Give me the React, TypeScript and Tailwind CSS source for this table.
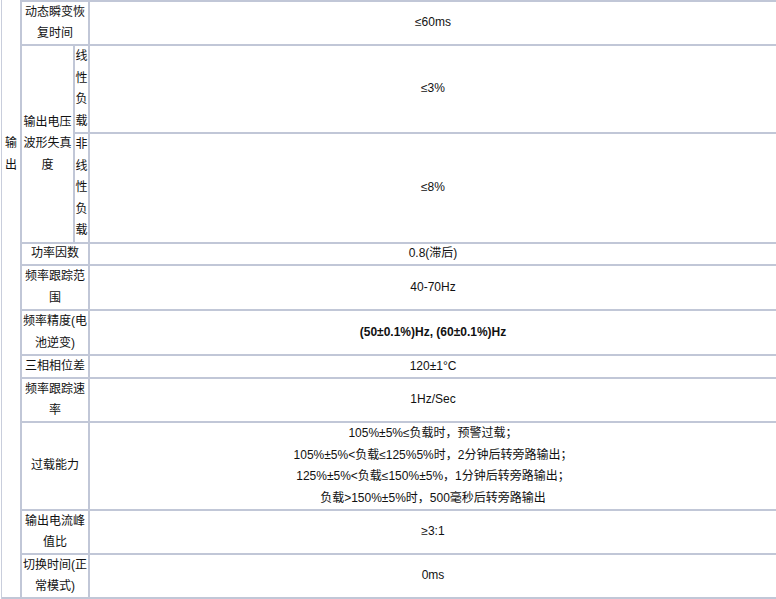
import React from 'react';

const cell = 'bg-white flex items-center justify-center text-center';

const overload = [
  '105%±5%≤负载时，预警过载；',
  '105%±5%<负载≤125%5%时，2分钟后转旁路输出；',
  '125%±5%<负载≤150%±5%，1分钟后转旁路输出；',
  '负载>150%±5%时，500毫秒后转旁路输出',
];

const rows: { label: string; value: React.ReactNode }[] = [
  { label: '功率因数', value: '0.8(滞后)' },
  { label: '频率跟踪范围', value: '40-70Hz' },
  { label: '频率精度(电池逆变)', value: <b>(50±0.1%)Hz, (60±0.1%)Hz</b> },
  { label: '三相相位差', value: '120±1°C' },
  { label: '频率跟踪速率', value: '1Hz/Sec' },
  {
    label: '过载能力',
    value: (
      <div>
        {overload.map(l => (
          <div key={l}>{l}</div>
        ))}
      </div>
    ),
  },
  { label: '输出电流峰值比', value: '≥3:1' },
  { label: '切换时间(正常模式)', value: '0ms' },
];

const App: React.FC = () => {
  return (
    <div
      className="w-[776px] h-[599px] overflow-hidden bg-white text-[12px] leading-[21.5px] text-[#111]"
      style={{ fontFamily: '"Liberation Sans", "Noto Sans CJK SC", sans-serif' }}
    >
      <div className="ml-[1px] w-[777px] border-l border-[#c9cedc] bg-[#c1c7d7] pr-[2px] pb-[2px] grid grid-cols-[18px_51px_13px_1fr] grid-rows-[0px_42px_86px_108px_20px_43px_43px_21px_42px_86px_42px_42px] gap-[2px]">
        {/* left group cell, continues above the visible area */}
        <div className="row-span-12 bg-white text-center pt-[133px] break-all">输出</div>
        <div className="col-span-3" />

        <div className={`${cell} col-span-2`}>动态瞬变恢复时间</div>
        <div className={cell}>≤60ms</div>

        <div className={`${cell} row-span-2`}>输出电压波形失真度</div>
        <div className={`${cell} break-all`}>线性负载</div>
        <div className={cell}>≤3%</div>
        <div className={`${cell} break-all`}>非线性负载</div>
        <div className={cell}>≤8%</div>

        {rows.map(r => (
          <React.Fragment key={r.label}>
            <div className={`${cell} col-span-2`}>{r.label}</div>
            <div className={cell}>{r.value}</div>
          </React.Fragment>
        ))}
      </div>
    </div>
  );
};

export default App;
